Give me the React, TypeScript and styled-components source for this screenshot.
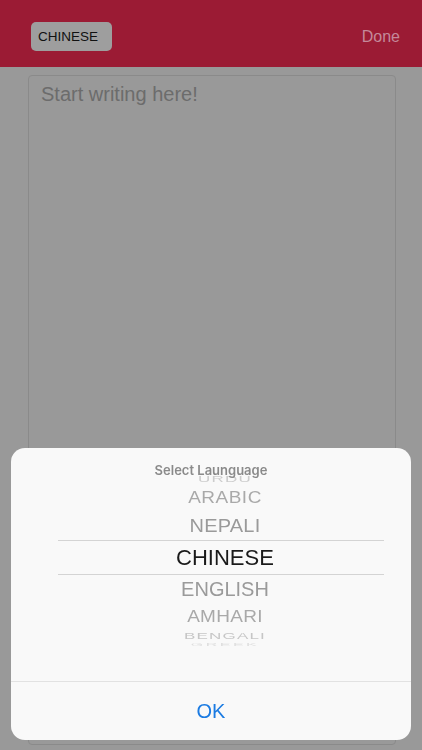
import styled, { createGlobalStyle } from "styled-components";

const GlobalStyle = createGlobalStyle`
  html, body {
    margin: 0;
    padding: 0;
    background: #999999;
    font-family: "Liberation Sans", Arial, sans-serif;
  }
  * { box-sizing: border-box; }
`;

const Page = styled.div`
  display: flex;
  flex-direction: column;
  width: 422px;
  height: 750px;
  overflow: hidden;
  background: #999999;
`;

const Header = styled.header`
  display: flex;
  align-items: center;
  justify-content: space-between;
  height: 67px;
  padding: 6px 22px 0 31px;
  background: #9b1b34;
  flex-shrink: 0;
`;

const LangButton = styled.button`
  height: 29px;
  width: 81px;
  border: none;
  border-radius: 5px;
  background: #9e9e9e;
  color: #111;
  font-family: "Liberation Sans", Arial, sans-serif;
  font-size: 13.5px;
  text-align: left;
  padding: 0 0 0 7px;
`;

const DoneButton = styled.button`
  border: none;
  background: none;
  padding: 0;
  color: #c4899a;
  font-family: "Liberation Sans", Arial, sans-serif;
  font-size: 16px;
`;

const Body = styled.main`
  flex: 1;
  padding: 8px 26px 5px 28px;
  display: flex;
`;

const Editor = styled.div`
  flex: 1;
  border: 1px solid #8a8a8a;
  border-radius: 4px;
  padding: 7px 12px;
  color: #6c6c6c;
  font-size: 20px;
`;

const Backdrop = styled.div`
  position: fixed;
  inset: 0;
  display: flex;
  flex-direction: column;
  justify-content: flex-end;
  padding: 0 11px 10px;
`;

const Sheet = styled.div`
  position: relative;
  display: flex;
  flex-direction: column;
  height: 292px;
  border-radius: 14px;
  background: #f9f9f9;
  overflow: hidden;
`;

const Title = styled.div`
  position: absolute;
  top: 14px;
  left: 0;
  right: 0;
  text-align: center;
  font-family: Inter, "Noto Sans", sans-serif;
  font-weight: 600;
  font-size: 13px;
  color: #8a8a8a;
  z-index: 2;
`;

const Wheel = styled.div`
  flex: 1;
  display: flex;
  flex-direction: column;
  margin: 0 27px 0 47px;
  padding-top: 24px;
`;

const Rows = styled.div`
  overflow: hidden;
  display: flex;
  flex-direction: column;
`;

const Row = styled.div<{ $h: number; $selected?: boolean }>`
  height: ${(p) => p.$h}px;
  display: flex;
  align-items: center;
  justify-content: center;
  padding-left: 8px;
  overflow: visible;
  ${(p) =>
    p.$selected &&
    `
    border-top: 1px solid #d4d4d4;
    border-bottom: 1px solid #d4d4d4;
  `}
`;

const Label = styled.span<{ $size: number; $scale: number; $color: string; $spacing: number }>`
  display: inline-block;
  font-size: ${(p) => p.$size}px;
  line-height: 1;
  color: ${(p) => p.$color};
  letter-spacing: ${(p) => p.$spacing}px;
  transform: scaleY(${(p) => p.$scale});
  white-space: nowrap;
`;

const Footer = styled.div`
  height: 59px;
  border-top: 1px solid #e2e2e2;
  display: flex;
  align-items: center;
  justify-content: center;
`;

const OkButton = styled.button`
  border: none;
  background: none;
  color: #1b7be2;
  font-family: "Liberation Sans", Arial, sans-serif;
  font-size: 20px;
  padding: 0;
`;

const items = [
  { name: "URDU", h: 12, size: 17, scale: 0.55, color: "#cdcdcd", spacing: 1.2 },
  { name: "ARABIC", h: 26, size: 19, scale: 0.88, color: "#a9a9a9", spacing: 0.5 },
  { name: "NEPALI", h: 30, size: 20, scale: 0.95, color: "#9a9a9a", spacing: 0.2 },
  { name: "CHINESE", h: 35, size: 22, scale: 1, color: "#1a1a1a", spacing: 0, selected: true },
  { name: "ENGLISH", h: 28, size: 20, scale: 0.97, color: "#9a9a9a", spacing: 0 },
  { name: "AMHARI", h: 26, size: 19, scale: 0.82, color: "#a9a9a9", spacing: 0.3 },
  { name: "BENGALI", h: 12, size: 17, scale: 0.55, color: "#c6c6c6", spacing: 1.2 },
  { name: "GREEK", h: 8, size: 16, scale: 0.25, color: "#dedede", spacing: 2.5 },
];

export default function App() {
  return (
    <>
      <GlobalStyle />
      <Page>
        <Header>
          <LangButton>CHINESE</LangButton>
          <DoneButton>Done</DoneButton>
        </Header>
        <Body>
          <Editor>Start writing here!</Editor>
        </Body>
      </Page>
      <Backdrop>
        <Sheet>
          <Title>Select Launguage</Title>
          <Wheel>
            <Rows>
              {items.map((it) => (
                <Row key={it.name} $h={it.h} $selected={it.selected}>
                  <Label $size={it.size} $scale={it.scale} $color={it.color} $spacing={it.spacing}>
                    {it.name}
                  </Label>
                </Row>
              ))}
            </Rows>
          </Wheel>
          <Footer>
            <OkButton>OK</OkButton>
          </Footer>
        </Sheet>
      </Backdrop>
    </>
  );
}
